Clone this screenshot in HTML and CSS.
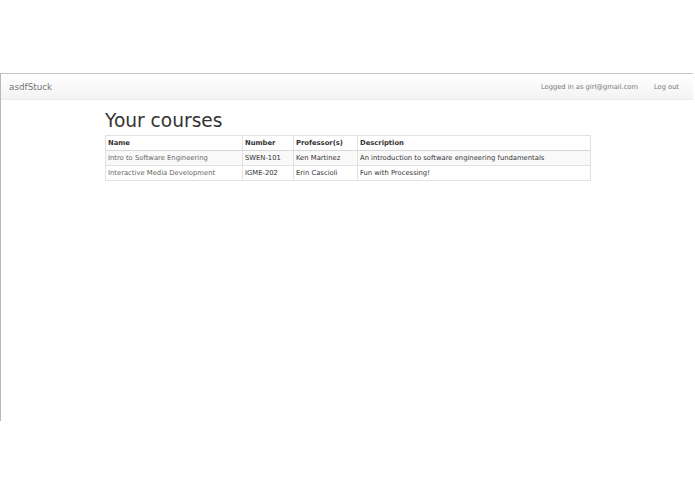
FILE: index.html
```html
<!DOCTYPE html>
<html>
<head>
<meta charset="utf-8">
<link rel="stylesheet" href="styles.css">
</head>
<body>
<div class="frame">
  <div class="navbar">
    <span class="brand">asdfStuck</span>
    <div class="nav-right">
      <span class="nav-link">Logged in as girl@gmail.com</span>
      <span class="nav-link">Log out</span>
    </div>
  </div>
  <div class="container">
    <h1 class="title">Your courses</h1>
    <table class="courses">
      <thead>
        <tr><th class="c-name">Name</th><th class="c-num">Number</th><th class="c-prof">Professor(s)</th><th>Description</th></tr>
      </thead>
      <tbody>
        <tr class="odd"><td class="name">Intro to Software Engineering</td><td>SWEN-101</td><td>Ken Martinez</td><td>An introduction to software engineering fundamentals</td></tr>
        <tr><td class="name">Interactive Media Development</td><td>IGME-202</td><td>Erin Cascioli</td><td>Fun with Processing!</td></tr>
      </tbody>
    </table>
  </div>
</div>
</body>
</html>
```
FILE: styles.css
```css
html, body {
  margin: 0;
  padding: 0;
  background: #fff;
  font-family: "DejaVu Sans", Verdana, sans-serif;
}
body {
  padding-top: 73px;
}
.frame {
  border-top: 1px solid #c4c4c4;
  border-left: 1px solid #b8b8b8;
  height: 347px;
  margin-right: 2px;
}
.navbar {
  height: 25px;
  display: flex;
  align-items: center;
  justify-content: space-between;
  background: linear-gradient(#ffffff, #f3f3f3);
  border-bottom: 1px solid #ececec;
  padding: 0 8px 0 8px;
}
.brand {
  font-size: 8.8px;
  color: #777;
}
.nav-right {
  display: flex;
  gap: 16px;
  padding-right: 6px;
}
.nav-link {
  font-size: 6.7px;
  color: #777;
}
.container {
  width: 486px;
  margin: 0 auto;
  padding-left: 2px;
}
.title {
  margin: 9px 0 2px 0;
  font-size: 18.6px;
  font-weight: normal;
  color: #333;
  line-height: 24px;
}
.courses {
  width: 486px;
  border-collapse: collapse;
  border: 1px solid #e2e2e2;
  font-size: 6.8px;
  color: #333;
}
.courses th, .courses td {
  text-align: left;
  padding: 0 2px;
  height: 14px;
  border-left: 1px solid #e2e2e2;
  border-top: 1px solid #e2e2e2;
  white-space: nowrap;
}
.courses th {
  font-weight: bold;
  border-bottom: 1px solid #d8d8d8;
}
.c-name { width: 132px; }
.c-num { width: 46px; }
.c-prof { width: 59px; }
.odd td {
  background: #f9f9f9;
}
.courses td.name {
  color: #666;
}
```
